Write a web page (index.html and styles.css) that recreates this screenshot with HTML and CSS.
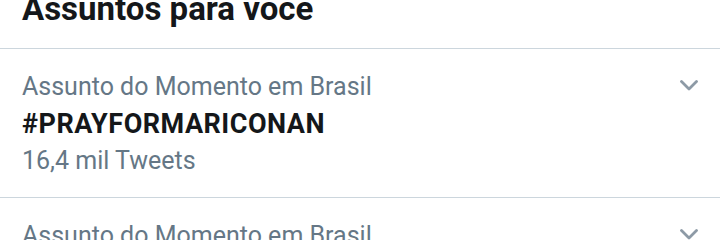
FILE: index.html
```html
<!DOCTYPE html>
<html lang="pt-br">

<head>
    <meta charset="UTF-8">
    <meta name="viewport" content="width=device-width, initial-scale=1.0">
    <title>Assuntos para voce</title>
    <link rel="stylesheet" href="styles.css">
</head>

<body>
    <h2 class="section-title">Assuntos para voce</h2>

    <div class="trend">
        <div class="trend-info">
            <p class="trend-context">Assunto do Momento em Brasil</p>
            <p class="trend-name">#PRAYFORMARICONAN</p>
            <p class="trend-count">16,4 mil Tweets</p>
        </div>
        <svg class="chevron" width="18" height="11" viewBox="0 0 18 11">
            <path d="M1.5 1.5 L9 9 L16.5 1.5" fill="none" stroke="#8d9aa6" stroke-width="2.8" stroke-linecap="round" stroke-linejoin="round"/>
        </svg>
    </div>

    <div class="trend">
        <div class="trend-info">
            <p class="trend-context">Assunto do Momento em Brasil</p>
            <p class="trend-name">#ForaBolsonaro</p>
            <p class="trend-count">12 mil Tweets</p>
        </div>
        <svg class="chevron" width="18" height="11" viewBox="0 0 18 11">
            <path d="M1.5 1.5 L9 9 L16.5 1.5" fill="none" stroke="#8d9aa6" stroke-width="2.8" stroke-linecap="round" stroke-linejoin="round"/>
        </svg>
    </div>
</body>

</html>
```

FILE: styles.css
```css
/* Lista de assuntos */
body {
    margin: 0;
    font-family: Roboto, "Noto Sans", sans-serif;
    background: #fff;
    overflow: hidden;
}
.section-title {
    margin: -11px 0 0;
    padding: 0 22px 19px;
    font-size: 33px;
    line-height: 40px;
    font-weight: 700;
    color: #14171a;
    border-bottom: 1px solid #ccd6dd;
}
.trend {
    display: flex;
    justify-content: space-between;
    align-items: flex-start;
    padding: 20px 22px 19px;
    border-bottom: 1px solid #ccd6dd;
}
.trend p {
    margin: 0;
}
.trend-context {
    font-size: 25px;
    line-height: 36px;
    color: #657786;
}
.trend .trend-name {
    margin-top: 1px;
    font-size: 27px;
    line-height: 37px;
    font-weight: 700;
    letter-spacing: 0.5px;
    color: #14171a;
}
.trend-count {
    font-size: 25px;
    line-height: 35px;
    color: #657786;
}
.chevron {
    margin-top: 11px;
}
```
